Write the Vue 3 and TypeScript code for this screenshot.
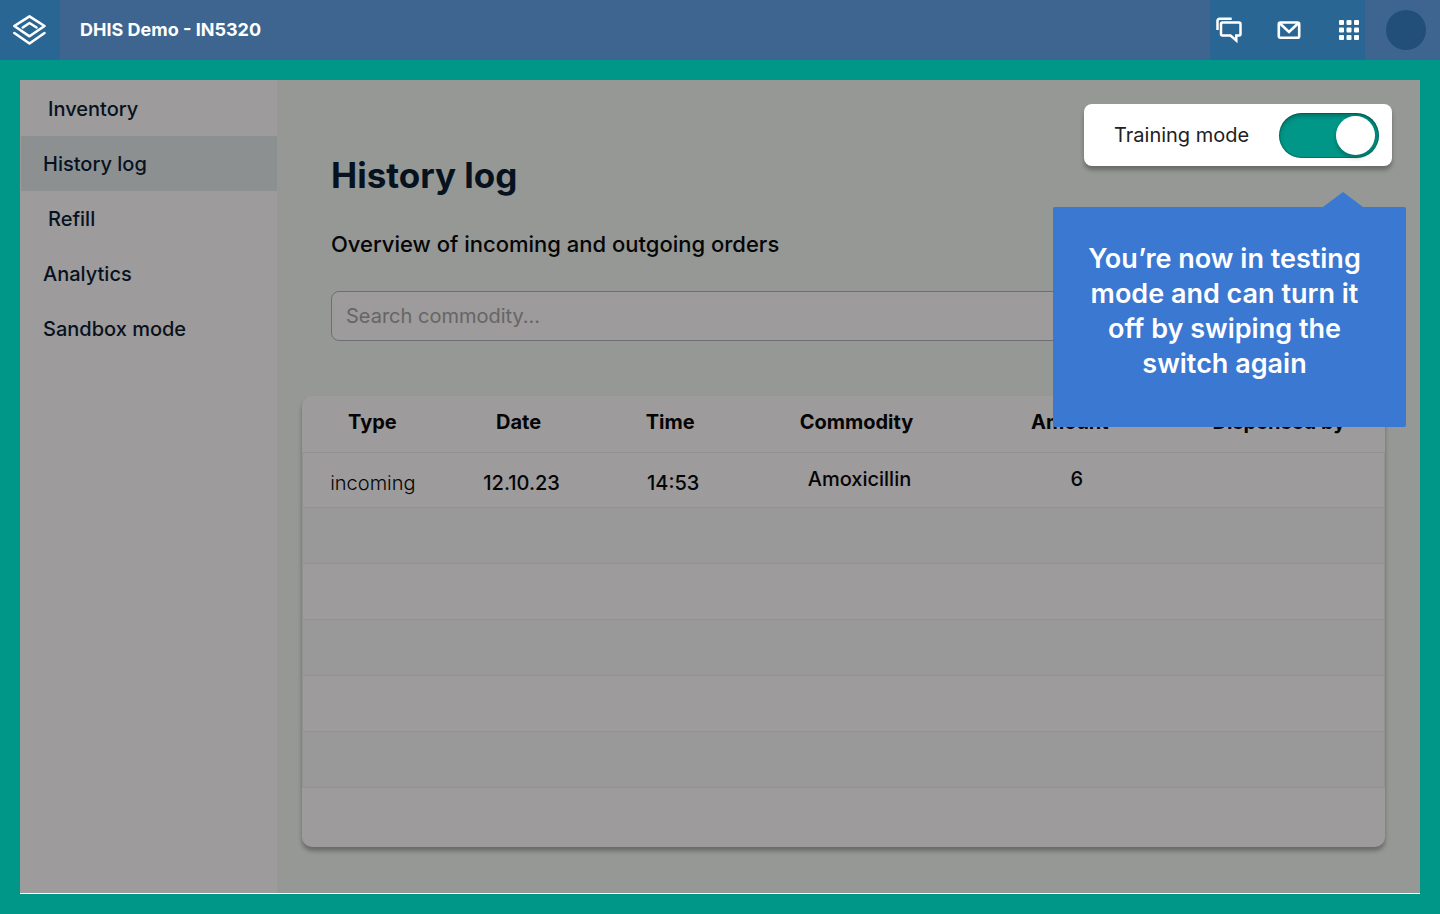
<script setup lang="ts">
import { ref } from 'vue'

interface NavItem {
  label: string
  active?: boolean
  inset?: boolean
}

interface Order {
  type: string
  date: string
  time: string
  commodity: string
  amount: string
  dispensedBy: string
}

const navItems: NavItem[] = [
  { label: 'Inventory', inset: true },
  { label: 'History log', active: true },
  { label: 'Refill', inset: true },
  { label: 'Analytics' },
  { label: 'Sandbox mode' },
]

const orders: Order[] = [
  { type: 'incoming', date: '12.10.23', time: '14:53', commodity: 'Amoxicillin', amount: '6', dispensedBy: '' },
]

const emptyRows = 6
const search = ref('')
const training = ref(true)
</script>

<template>
  <div class="page">
    <header class="topbar">
      <a class="logo" href="#" aria-label="Home">
        <svg width="36" height="32" viewBox="0 0 36 32" fill="none" stroke="#fff" stroke-width="2.6" stroke-linejoin="round" stroke-linecap="round">
          <path d="M17.500 2.300 32.500 12 17.500 22.300 2.300 12Z" />
          <path d="M10.800 13.500 17.500 9 24.500 13.500" />
          <path d="M2.300 19 17.500 29.500 32.500 19" />
        </svg>
      </a>
      <span class="brand">DHIS Demo - IN5320</span>
      <div class="tools">
        <button type="button" aria-label="Messages">
          <svg width="28" height="28" viewBox="0 0 28 28" fill="none" stroke="#fff" stroke-width="2.5">
            <path d="M2.500 14V4.800a2 2 0 0 1 2-2H16.700" />
            <path d="M7.500 6.500H24a1.500 1.500 0 0 1 1.500 1.500v10a1.500 1.500 0 0 1-1.500 1.500h-2.700v5L15.500 19.500h-8A1.500 1.500 0 0 1 6 18V8a1.500 1.500 0 0 1 1.500-1.500Z" />
          </svg>
        </button>
        <button type="button" aria-label="Mail">
          <svg width="28" height="28" viewBox="0 0 28 28" fill="none" stroke="#fff" stroke-width="2.6">
            <rect x="3.800" y="6.500" width="20.400" height="15.200" rx="1.500" />
            <path d="M5 7.500 14 16l9-8.500" />
          </svg>
        </button>
        <button type="button" aria-label="Apps">
          <svg width="28" height="28" viewBox="0 0 28 28" fill="#fff">
            <template v-for="r in 3" :key="r">
              <rect v-for="c in 3" :key="c" :x="c * 7.5 - 3.5" :y="r * 7.5 - 3.5" width="5" height="5" rx="1" />
            </template>
          </svg>
        </button>
      </div>
      <button class="avatar" type="button" aria-label="Profile"></button>
    </header>

    <div class="frame">
      <nav class="sidebar">
        <a
          v-for="item in navItems"
          :key="item.label"
          href="#"
          :class="{ active: item.active, inset: item.inset }"
        >{{ item.label }}</a>
      </nav>

      <main class="content">
        <div class="head">
          <h1>History log</h1>
          <div class="training">
            <label for="training">Training mode</label>
            <input id="training" v-model="training" type="checkbox" role="switch" />
            <div v-if="training" class="callout" role="status">
              You’re now in testing mode and can turn it off by swiping the switch again
            </div>
          </div>
        </div>
        <p class="lead">Overview of incoming and outgoing orders</p>
        <input v-model="search" class="search" type="text" placeholder="Search commodity..." aria-label="Search commodity" />

        <table>
          <colgroup>
            <col class="w-type" />
            <col class="w-date" />
            <col class="w-date" />
            <col class="w-commodity" />
            <col class="w-amount" />
            <col />
          </colgroup>
          <thead>
            <tr>
              <th>Type</th>
              <th>Date</th>
              <th>Time</th>
              <th>Commodity</th>
              <th>Amount</th>
              <th>Dispensed by</th>
            </tr>
          </thead>
          <tbody>
            <tr v-for="order in orders" :key="order.date + order.time" class="order">
              <td class="low light">{{ order.type }}</td>
              <td class="low shift">{{ order.date }}</td>
              <td class="low shift">{{ order.time }}</td>
              <td class="high shift">{{ order.commodity }}</td>
              <td class="high amount">{{ order.amount }}</td>
              <td>{{ order.dispensedBy }}</td>
            </tr>
            <tr v-for="n in emptyRows" :key="n">
              <td colspan="6"></td>
            </tr>
          </tbody>
        </table>
      </main>
    </div>
  </div>
</template>

<style>
body {
  margin: 0;
}
</style>

<style scoped>
.page,
.page * {
  box-sizing: border-box;
}

.page {
  display: flex;
  flex-direction: column;
  min-height: 100vh;
  background: #009688;
  color: #050505;
  font-family: Inter, "Liberation Sans", sans-serif;
  font-size: 20px;
  font-weight: 500;
}

button {
  padding: 0;
  border: 0;
  background: none;
}

.topbar {
  display: flex;
  align-items: center;
  height: 60px;
  padding-right: 14px;
  background: #3d658f;
}

.logo {
  display: flex;
  align-items: center;
  justify-content: center;
  width: 60px;
  height: 60px;
  background: #2a6693;
}

.brand {
  margin-left: 20px;
  padding-bottom: 2px;
  color: #fff;
  font-size: 18px;
  font-weight: 700;
}

.tools {
  display: flex;
  gap: 32px;
  align-items: center;
  height: 60px;
  margin-left: auto;
  padding: 0 2px 0 5px;
  background: #2a6693;
}

.tools button,
.tools svg {
  display: block;
}

.avatar {
  width: 40px;
  height: 40px;
  margin-left: 21px;
  border-radius: 50%;
  background: #214f79;
}

.frame {
  display: flex;
  flex: 1;
  margin: 20px;
  border-bottom: 1px solid #fff;
  background: #969896;
}

.sidebar {
  width: 257px;
  padding: 1px 0 0 1px;
  background: #9d9b9b;
}

.sidebar a {
  display: flex;
  align-items: center;
  height: 55px;
  padding: 0 0 0 22px;
  color: #07121f;
  text-decoration: none;
}

.sidebar .inset {
  padding-left: 27px;
}

.sidebar .active {
  background: #8d9091;
}

.content {
  flex: 1;
  padding: 24px 35px 45px 25px;
}

.head {
  display: flex;
  align-items: flex-start;
  justify-content: space-between;
  margin-right: -7px;
  padding-left: 29px;
}

h1 {
  margin: 49px 0 0;
  color: #07121f;
  font-size: 35px;
  font-weight: 700;
  line-height: 44px;
}

.training {
  position: relative;
  display: flex;
  align-items: center;
  justify-content: space-between;
  width: 308px;
  height: 62px;
  padding: 0 13px 0 30px;
  border-radius: 8px;
  background: #fff;
  box-shadow: 0 4px 4px rgba(0, 0, 0, 0.3);
  color: #212121;
  font-weight: 400;
}

.training input {
  display: flex;
  align-items: center;
  justify-content: flex-start;
  width: 100px;
  height: 45px;
  margin: 0;
  padding: 0 4px;
  border-radius: 23px;
  background: #8d9091;
  box-shadow: inset 0 0 0 1px rgba(0, 0, 0, 0.2), inset 0 3px 4px rgba(0, 0, 0, 0.25);
  appearance: none;
}

.training input:checked {
  justify-content: flex-end;
  background: #009688;
}

.training input::before {
  width: 39px;
  height: 39px;
  border-radius: 50%;
  background: #fff;
  box-shadow: 0 3px 4px rgba(0, 0, 0, 0.25);
  content: "";
}

.callout {
  position: absolute;
  top: 103px;
  right: -14px;
  width: 353px;
  height: 220px;
  padding: 34px 40px 0 30px;
  border-radius: 2px;
  background: #3a78d2;
  color: #fff;
  font-size: 27px;
  font-weight: 600;
  line-height: 35px;
  text-align: center;
}

.callout::before {
  position: absolute;
  top: -15px;
  right: 43px;
  width: 40px;
  height: 15px;
  background: #3a78d2;
  clip-path: polygon(50% 0, 100% 100%, 0 100%);
  content: "";
}

.lead {
  margin: 33px 0 0 29px;
  font-size: 22px;
  line-height: 28px;
}

.search {
  display: block;
  width: calc(100% - 29px);
  height: 50px;
  margin: 33px 0 55px 29px;
  padding: 0 14px;
  border: 1px solid #6d6e78;
  border-radius: 8px;
  background: #9d9b9b;
  color: #050505;
  font: 400 20px Inter, "Liberation Sans", sans-serif;
}

.search::placeholder {
  color: #666565;
}

table {
  width: 100%;
  border-collapse: separate;
  border-spacing: 0;
  border-radius: 10px;
  background: #9d9b9b;
  box-shadow: 0 4px 4px rgba(0, 0, 0, 0.3);
  table-layout: fixed;
}

.w-type {
  width: 13%;
}

.w-date {
  width: 14%;
}

.w-commodity {
  width: 20.4%;
}

.w-amount {
  width: 19%;
}

th,
td {
  padding: 0;
  text-align: center;
}

th {
  height: 56px;
  padding-bottom: 4px;
  font-weight: 700;
}

td {
  height: 56px;
  border-top: 1px solid #949192;
}

.order td {
  height: 55px;
}

td:first-child {
  border-left: 1px solid #949192;
}

td:last-child {
  border-right: 1px solid #949192;
}

td.low {
  padding-top: 6px;
}

td.high {
  padding-bottom: 2px;
}

td.light {
  font-weight: 300;
}

td.shift {
  padding-left: 6px;
}

td.amount {
  padding-left: 14px;
}

tbody tr:nth-child(even) td {
  background: #989998;
}

tbody tr:last-child td {
  height: 60px;
  border-right: 0;
  border-left: 0;
}
</style>
